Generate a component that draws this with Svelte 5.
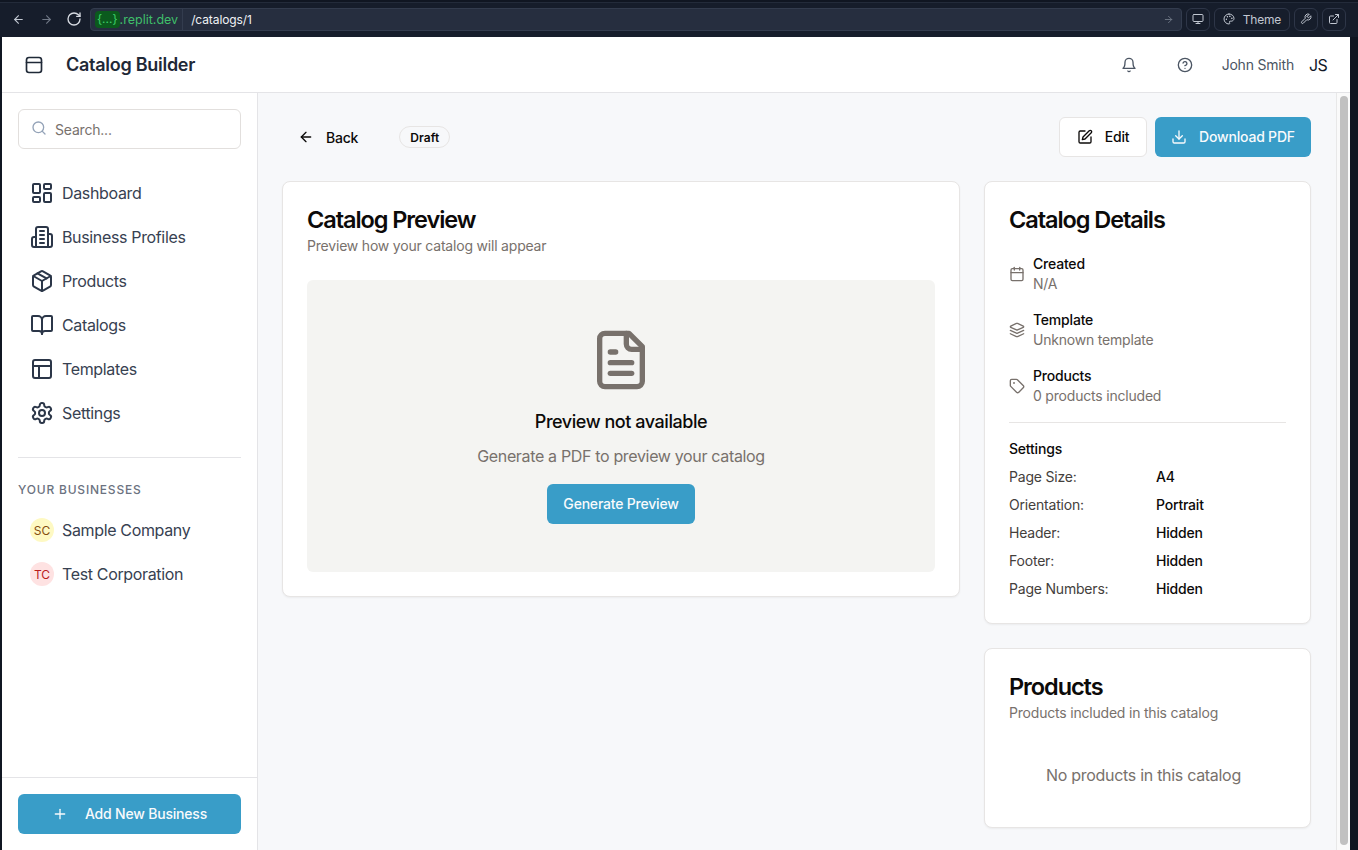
<script>
  const navItems = [
    { label: 'Dashboard', icon: 'dashboard' },
    { label: 'Business Profiles', icon: 'building' },
    { label: 'Products', icon: 'box' },
    { label: 'Catalogs', icon: 'book' },
    { label: 'Templates', icon: 'layout' },
    { label: 'Settings', icon: 'gear' }
  ];

  const businesses = [
    { name: 'Sample Company', initials: 'SC', tone: 'yellow' },
    { name: 'Test Corporation', initials: 'TC', tone: 'red' }
  ];

  const settings = [
    ['Page Size:', 'A4'],
    ['Orientation:', 'Portrait'],
    ['Header:', 'Hidden'],
    ['Footer:', 'Hidden'],
    ['Page Numbers:', 'Hidden']
  ];
</script>

{#snippet navIcon(name)}
  <svg class="nav-icon" viewBox="0 0 24 24">
    {#if name === 'dashboard'}
      <rect x="3" y="3" width="7" height="9" rx="1" /><rect x="14" y="3" width="7" height="5" rx="1" /><rect x="14" y="12" width="7" height="9" rx="1" /><rect x="3" y="16" width="7" height="5" rx="1" />
    {:else if name === 'building'}
      <path d="M6 22V4a2 2 0 0 1 2-2h8a2 2 0 0 1 2 2v18Z" /><path d="M6 12H4a2 2 0 0 0-2 2v6a2 2 0 0 0 2 2h2" /><path d="M18 9h2a2 2 0 0 1 2 2v9a2 2 0 0 1-2 2h-2" /><path d="M10 6h4" /><path d="M10 10h4" /><path d="M10 14h4" /><path d="M10 18h4" />
    {:else if name === 'box'}
      <path d="M21 8a2 2 0 0 0-1-1.73l-7-4a2 2 0 0 0-2 0l-7 4A2 2 0 0 0 3 8v8a2 2 0 0 0 1 1.73l7 4a2 2 0 0 0 2 0l7-4A2 2 0 0 0 21 16Z" /><path d="m3.3 7 8.7 5 8.7-5" /><path d="M12 22V12" /><path d="m7.5 4.27 9 5.15" />
    {:else if name === 'book'}
      <path d="M12 7v14" /><path d="M3 18a1 1 0 0 1-1-1V4a1 1 0 0 1 1-1h5a4 4 0 0 1 4 4 4 4 0 0 1 4-4h5a1 1 0 0 1 1 1v13a1 1 0 0 1-1 1h-6a3 3 0 0 0-3 3 3 3 0 0 0-3-3z" />
    {:else if name === 'layout'}
      <rect x="3" y="3" width="18" height="18" rx="2" /><path d="M3 9h18" /><path d="M9 21V9" />
    {:else}
      <path d="M12.22 2h-.44a2 2 0 0 0-2 2v.18a2 2 0 0 1-1 1.73l-.43.25a2 2 0 0 1-2 0l-.15-.08a2 2 0 0 0-2.73.73l-.22.38a2 2 0 0 0 .73 2.73l.15.1a2 2 0 0 1 1 1.72v.51a2 2 0 0 1-1 1.74l-.15.09a2 2 0 0 0-.73 2.73l.22.38a2 2 0 0 0 2.73.73l.15-.08a2 2 0 0 1 2 0l.43.25a2 2 0 0 1 1 1.73V20a2 2 0 0 0 2 2h.44a2 2 0 0 0 2-2v-.18a2 2 0 0 1 1-1.73l.43-.25a2 2 0 0 1 2 0l.15.08a2 2 0 0 0 2.73-.73l.22-.39a2 2 0 0 0-.73-2.73l-.15-.08a2 2 0 0 1-1-1.74v-.5a2 2 0 0 1 1-1.74l.15-.09a2 2 0 0 0 .73-2.73l-.22-.38a2 2 0 0 0-2.73-.73l-.15.08a2 2 0 0 1-2 0l-.43-.25a2 2 0 0 1-1-1.73V4a2 2 0 0 0-2-2z" /><circle cx="12" cy="12" r="3" />
    {/if}
  </svg>
{/snippet}

<div class="frame">
  <div class="browser">
    <div class="tabs"></div>
    <div class="toolbar">
      <svg class="tool-arrow" viewBox="0 0 24 24"><path d="M19 12H5" /><path d="m12 19-7-7 7-7" /></svg>
      <svg class="tool-arrow dim" viewBox="0 0 24 24"><path d="M5 12h14" /><path d="m12 5 7 7-7 7" /></svg>
      <svg class="tool-reload" viewBox="0 0 24 24"><path d="M21 12a9 9 0 1 1-9-9c2.52 0 4.93 1 6.74 2.74L21 8" /><path d="M21 3v5h-5" /></svg>
      <div class="url">
        <div class="domain"><span class="dev-badge">&#123;...&#125;</span>.replit.dev</div>
        <div class="path">/catalogs/1</div>
        <svg class="go" viewBox="0 0 24 24"><path d="M5 12h14" /><path d="m12 5 7 7-7 7" /></svg>
      </div>
      <div class="tool-btn square">
        <svg viewBox="0 0 24 24"><rect x="2" y="3" width="20" height="14" rx="2" /><path d="M8 21h8" /><path d="M12 17v4" /></svg>
      </div>
      <div class="tool-btn theme">
        <svg viewBox="0 0 24 24"><circle cx="13.5" cy="6.5" r=".5" /><circle cx="17.5" cy="10.5" r=".5" /><circle cx="8.5" cy="7.5" r=".5" /><circle cx="6.5" cy="12.5" r=".5" /><path d="M12 2C6.5 2 2 6.5 2 12s4.5 10 10 10c.93 0 1.65-.75 1.65-1.69 0-.44-.18-.83-.44-1.12-.29-.29-.44-.65-.44-1.13A1.64 1.64 0 0 1 14.44 16.4h1.99c3.05 0 5.55-2.5 5.55-5.55C21.97 6 17.5 2 12 2z" /></svg>
        <span>Theme</span>
      </div>
      <div class="tool-btn square">
        <svg viewBox="0 0 24 24"><path d="M14.7 6.3a1 1 0 0 0 0 1.4l1.6 1.6a1 1 0 0 0 1.4 0l3.77-3.77a6 6 0 0 1-7.94 7.94l-6.91 6.91a2.12 2.12 0 0 1-3-3l6.91-6.91a6 6 0 0 1 7.94-7.94l-3.76 3.76z" /></svg>
      </div>
      <div class="tool-btn square">
        <svg viewBox="0 0 24 24"><path d="M18 13v6a2 2 0 0 1-2 2H5a2 2 0 0 1-2-2V8a2 2 0 0 1 2-2h6" /><path d="m15 3 6 0 0 6" /><path d="M10 14 21 3" /></svg>
      </div>
    </div>
  </div>

  <div class="app">
    <header class="topbar">
      <div class="brand">
        <svg class="brand-icon" viewBox="0 0 24 24"><rect x="3" y="3" width="18" height="18" rx="3" /><path d="M3 9h18" /></svg>
        <h1>Catalog Builder</h1>
      </div>
      <div class="user">
        <svg class="bell" viewBox="0 0 24 24"><path d="M6 8a6 6 0 0 1 12 0c0 7 3 9 3 9H3s3-2 3-9" /><path d="M10.3 21a1.94 1.94 0 0 0 3.4 0" /></svg>
        <svg class="help" viewBox="0 0 24 24"><circle cx="12" cy="12" r="10" /><path d="M9.09 9a3 3 0 0 1 5.83 1c0 2-3 3-3 3" /><path d="M12 17h.01" /></svg>
        <span class="user-name">John Smith</span>
        <span class="user-initials">JS</span>
      </div>
    </header>

    <div class="body">
      <aside class="sidebar">
        <div class="sidebar-top">
          <div class="search">
            <svg viewBox="0 0 24 24"><circle cx="11" cy="11" r="8" /><path d="m21 21-4.3-4.3" /></svg>
            <span>Search...</span>
          </div>
          <nav class="nav">
            {#each navItems as item}
              <div class="nav-item">
                {@render navIcon(item.icon)}
                <span>{item.label}</span>
              </div>
            {/each}
          </nav>
          <div class="side-rule"></div>
          <div class="side-heading">YOUR BUSINESSES</div>
          <div class="biz-list">
            {#each businesses as biz}
              <div class="nav-item biz">
                <span class="avatar {biz.tone}">{biz.initials}</span>
                <span>{biz.name}</span>
              </div>
            {/each}
          </div>
        </div>
        <div class="sidebar-foot">
          <button class="primary add">
            <svg viewBox="0 0 24 24"><path d="M5 12h14" /><path d="M12 5v14" /></svg>
            Add New Business
          </button>
        </div>
      </aside>

      <main class="main">
        <div class="content">
          <div class="actions-row">
            <div class="left-actions">
              <div class="back">
                <svg viewBox="0 0 24 24"><path d="m12 19-7-7 7-7" /><path d="M19 12H5" /></svg>
                <span>Back</span>
              </div>
              <span class="badge">Draft</span>
            </div>
            <div class="right-actions">
              <button class="outline">
                <svg viewBox="0 0 24 24"><path d="M12 3H5a2 2 0 0 0-2 2v14a2 2 0 0 0 2 2h14a2 2 0 0 0 2-2v-7" /><path d="M18.375 2.625a2.121 2.121 0 1 1 3 3L12 15l-4 1 1-4Z" /></svg>
                Edit
              </button>
              <button class="primary download">
                <svg viewBox="0 0 24 24"><path d="M21 15v4a2 2 0 0 1-2 2H5a2 2 0 0 1-2-2v-4" /><path d="m7 10 5 5 5-5" /><path d="M12 15V3" /></svg>
                Download PDF
              </button>
            </div>
          </div>

          <div class="columns">
            <section class="card preview-card">
              <h2>Catalog Preview</h2>
              <p class="sub">Preview how your catalog will appear</p>
              <div class="preview">
                <svg class="file-icon" viewBox="0 0 24 24"><path d="M15 2H6a2 2 0 0 0-2 2v16a2 2 0 0 0 2 2h12a2 2 0 0 0 2-2V7Z" /><path d="M14 2v4a2 2 0 0 0 2 2h4" /><path d="M10 9H8" /><path d="M16 13H8" /><path d="M16 17H8" /></svg>
                <h3>Preview not available</h3>
                <p>Generate a PDF to preview your catalog</p>
                <button class="primary generate">Generate Preview</button>
              </div>
            </section>

            <div class="side-cards">
              <section class="card details">
                <h2>Catalog Details</h2>
                <div class="facts">
                  <div class="fact">
                    <svg viewBox="0 0 24 24"><path d="M8 2v4" /><path d="M16 2v4" /><rect x="3" y="4" width="18" height="18" rx="2" /><path d="M3 10h18" /></svg>
                    <div><div class="fact-label">Created</div><div class="fact-value">N/A</div></div>
                  </div>
                  <div class="fact">
                    <svg viewBox="0 0 24 24"><path d="m12.83 2.18a2 2 0 0 0-1.66 0L2.6 6.08a1 1 0 0 0 0 1.83l8.58 3.91a2 2 0 0 0 1.66 0l8.58-3.9a1 1 0 0 0 0-1.83Z" /><path d="m22 17.65-9.17 4.16a2 2 0 0 1-1.66 0L2 17.65" /><path d="m22 12.65-9.17 4.16a2 2 0 0 1-1.66 0L2 12.65" /></svg>
                    <div><div class="fact-label">Template</div><div class="fact-value">Unknown template</div></div>
                  </div>
                  <div class="fact">
                    <svg viewBox="0 0 24 24"><path d="M12.586 2.586A2 2 0 0 0 11.172 2H4a2 2 0 0 0-2 2v7.172a2 2 0 0 0 .586 1.414l8.704 8.704a2.426 2.426 0 0 0 3.42 0l6.58-6.58a2.426 2.426 0 0 0 0-3.42z" /><circle cx="7.5" cy="7.5" r=".5" /></svg>
                    <div><div class="fact-label">Products</div><div class="fact-value">0 products included</div></div>
                  </div>
                </div>
                <div class="card-rule"></div>
                <div class="settings-title">Settings</div>
                <div class="settings">
                  {#each settings as [key, value]}
                    <div class="setting">
                      <span class="setting-key">{key}</span>
                      <span class="setting-value">{value}</span>
                    </div>
                  {/each}
                </div>
              </section>

              <section class="card products">
                <h2>Products</h2>
                <p class="sub">Products included in this catalog</p>
                <div class="empty">No products in this catalog</div>
              </section>
            </div>
          </div>
        </div>
        <div class="scrollbar"><div class="thumb"></div></div>
      </main>
    </div>
  </div>
</div>

<style>
  :global(body) {
    margin: 0;
    overflow: hidden;
    background: #101622;
  }

  .frame {
    width: 1358px;
    height: 850px;
    display: flex;
    flex-direction: column;
    overflow: hidden;
    background: #101622;
    font-family: Inter, "Liberation Sans", sans-serif;
    letter-spacing: -0.2px;
    color: #0c0a09;
  }

  svg {
    fill: none;
    stroke: currentColor;
    stroke-width: 2;
    stroke-linecap: round;
    stroke-linejoin: round;
    flex: none;
  }

  button {
    font-family: inherit;
    letter-spacing: inherit;
    padding: 0 0 1px;
  }

  /* browser chrome */
  .browser {
    height: 37px;
    flex: none;
    background: #161d2b;
  }

  .tabs {
    height: 3px;
    background: #101622;
    border-bottom: 1px solid #232b3a;
    box-sizing: border-box;
  }

  .toolbar {
    display: flex;
    align-items: center;
    height: 32px;
    padding: 0 12px 0 12px;
    color: #c2c8d2;
  }

  .tool-arrow {
    width: 13px;
    height: 13px;
    margin-right: 15px;
    color: #c2c8d2;
  }

  .tool-arrow.dim {
    color: #6f7785;
    margin-right: 13px;
  }

  .tool-reload {
    width: 16px;
    height: 16px;
    margin-right: 8px;
    color: #d7dbe2;
  }

  .url {
    flex: 1;
    height: 23px;
    display: flex;
    align-items: center;
    background: #262e3f;
    border: 1px solid #333c4e;
    border-radius: 4px;
    box-sizing: border-box;
    font-size: 12px;
    min-width: 0;
  }

  .domain {
    height: 100%;
    display: flex;
    align-items: center;
    padding: 0 4px;
    border-right: 1px solid #333c4e;
    color: #3fbf6a;
    font-size: 12.5px;
    letter-spacing: 0;
  }

  .dev-badge {
    background: #0b5a1d;
    color: #3fd06a;
    border-radius: 4px;
    height: 17px;
    line-height: 16px;
    padding: 0 2px;
    font-size: 12px;
  }

  .path {
    flex: 1;
    padding-left: 8px;
    color: #f0f2f5;
    letter-spacing: -0.1px;
  }

  .go {
    width: 11px;
    height: 11px;
    margin-right: 7px;
    color: #6f7785;
  }

  .tool-btn {
    height: 23px;
    margin-left: 4px;
    display: flex;
    align-items: center;
    justify-content: center;
    border: 1px solid #2e3648;
    border-radius: 6px;
    box-sizing: border-box;
    color: #c2c8d2;
    font-size: 12px;
  }

  .tool-btn svg {
    width: 12px;
    height: 12px;
  }

  .tool-btn.square {
    width: 24px;
  }

  .tool-btn.theme {
    width: 76px;
    gap: 8px;
  }

  /* app shell */
  .app {
    flex: 1;
    min-height: 0;
    margin: 0 8px 0 2px;
    display: flex;
    flex-direction: column;
    background: #fff;
  }

  .topbar {
    height: 56px;
    flex: none;
    box-sizing: border-box;
    display: flex;
    align-items: center;
    justify-content: space-between;
    padding: 0 23px 0 22px;
    border-bottom: 1px solid #e4e4e7;
  }

  .brand {
    display: flex;
    align-items: center;
    gap: 22px;
  }

  .brand-icon {
    width: 20px;
    height: 20px;
    color: #1f2937;
  }

  .brand h1 {
    margin: 1px 0 0;
    font-size: 18px;
    font-weight: 600;
    letter-spacing: -0.27px;
    color: #1f2937;
    line-height: 24px;
  }

  .user {
    display: flex;
    align-items: center;
    color: #4b5563;
  }

  .bell {
    width: 16px;
    height: 16px;
  }

  .help {
    width: 16px;
    height: 16px;
    margin-left: 40px;
  }

  .user-name {
    margin-left: 29px;
    font-size: 14px;
  }

  .user-initials {
    margin-left: 15px;
    font-size: 16px;
    letter-spacing: -0.7px;
    color: #111827;
  }

  .body {
    flex: 1;
    min-height: 0;
    display: flex;
  }

  /* sidebar */
  .sidebar {
    width: 256px;
    flex: none;
    box-sizing: border-box;
    display: flex;
    flex-direction: column;
    justify-content: space-between;
    border-right: 1px solid #e4e4e7;
  }

  .sidebar-top {
    padding: 16px 16px 0;
  }

  .search {
    height: 40px;
    box-sizing: border-box;
    display: flex;
    align-items: center;
    gap: 8px;
    padding-left: 12px;
    border: 1px solid #e2dfdd;
    border-radius: 6px;
    font-size: 14px;
    color: #78716c;
  }

  .search svg {
    width: 16px;
    height: 16px;
    color: #94a3b8;
    margin-top: -3px;
  }

  .nav {
    margin-top: 24px;
    display: flex;
    flex-direction: column;
    gap: 4px;
  }

  .nav-item {
    height: 40px;
    display: flex;
    align-items: center;
    gap: 8px;
    padding-left: 12px;
    font-size: 16px;
    letter-spacing: -0.35px;
    color: #374151;
  }

  .nav-icon {
    width: 24px;
    height: 24px;
    color: #2b3648;
  }

  .side-rule {
    height: 1px;
    margin-top: 24px;
    background: #e4e4e7;
  }

  .side-heading {
    margin-top: 24px;
    font-size: 12px;
    line-height: 16px;
    font-weight: 500;
    letter-spacing: 0.8px;
    color: #6b7280;
  }

  .biz-list {
    margin-top: 12px;
    display: flex;
    flex-direction: column;
    gap: 4px;
  }

  .avatar {
    width: 24px;
    height: 24px;
    border-radius: 50%;
    display: flex;
    align-items: center;
    justify-content: center;
    font-size: 12px;
    letter-spacing: 0;
    flex: none;
  }

  .avatar.yellow {
    background: #fef9c3;
    color: #854d0e;
  }

  .avatar.red {
    background: #fee2e2;
    color: #b91c1c;
  }

  .sidebar-foot {
    border-top: 1px solid #e4e4e7;
    padding: 16px;
  }

  .primary {
    border: none;
    background: #399dc8;
    color: #f8fafc;
    border-radius: 6px;
    font-size: 14px;
    font-weight: 450;
    display: flex;
    align-items: center;
    justify-content: center;
  }

  .add {
    width: 100%;
    height: 40px;
    gap: 17px;
  }

  .add svg {
    width: 16px;
    height: 16px;
  }

  /* main */
  .main {
    flex: 1;
    min-width: 0;
    display: flex;
    background: #f7f8fa;
  }

  .content {
    flex: 1;
    min-width: 0;
    padding: 24px 25px 0 24px;
  }

  .scrollbar {
    width: 14px;
    flex: none;
    border-left: 1px solid #e8e8e8;
    background: #fafafa;
    box-sizing: border-box;
    padding: 3px 2px 0 3px;
  }

  .thumb {
    height: 749px;
    border-radius: 4px;
    background: #c1c1c1;
  }

  .actions-row {
    display: flex;
    align-items: center;
    justify-content: space-between;
    height: 40px;
  }

  .left-actions {
    display: flex;
    align-items: center;
  }

  .back {
    display: flex;
    align-items: center;
    gap: 12px;
    padding-left: 16px;
    font-size: 14px;
    font-weight: 450;
  }

  .back svg {
    width: 16px;
    height: 16px;
  }

  .badge {
    margin-left: 41px;
    height: 22px;
    box-sizing: border-box;
    display: flex;
    align-items: center;
    padding: 0 10px;
    border: 1px solid #e7e5e4;
    border-radius: 999px;
    font-size: 12px;
    font-weight: 600;
    letter-spacing: 0.1px;
  }

  .right-actions {
    display: flex;
    gap: 8px;
  }

  .outline {
    width: 88px;
    height: 40px;
    box-sizing: border-box;
    display: flex;
    align-items: center;
    justify-content: center;
    gap: 12px;
    border: 1px solid #e7e5e4;
    border-radius: 6px;
    background: #fff;
    color: #0c0a09;
    font-size: 14px;
    font-weight: 450;
  }

  .outline svg,
  .download svg {
    width: 16px;
    height: 16px;
  }

  .download {
    width: 156px;
    height: 40px;
    gap: 12px;
  }

  .columns {
    margin-top: 24px;
    display: grid;
    grid-template-columns: 678px 327px;
    gap: 24px;
    align-items: start;
  }

  .card {
    box-sizing: border-box;
    background: #fff;
    border: 1px solid #e7e5e4;
    border-radius: 8px;
    box-shadow: 0 1px 2px rgba(0, 0, 0, 0.05);
    padding: 24px;
  }

  .card h2 {
    margin: 0;
    font-size: 23.5px;
    line-height: 28px;
    font-weight: 600;
    letter-spacing: -1.07px;
    color: #0c0a09;
  }

  .sub {
    margin: 2px 0 0;
    font-size: 14px;
    line-height: 20px;
    color: #78716c;
  }

  .preview {
    margin-top: 24px;
    height: 292px;
    display: flex;
    flex-direction: column;
    align-items: center;
    background: #f4f4f2;
    border-radius: 6px;
  }

  .preview-card {
    min-height: 416px;
  }

  .file-icon {
    width: 64px;
    height: 64px;
    margin-top: 48px;
    color: #78716c;
  }

  .preview h3 {
    margin: 16px 0 0;
    font-size: 18px;
    line-height: 28px;
    font-weight: 500;
    letter-spacing: -0.45px;
  }

  .preview p {
    margin: 8px 0 0;
    font-size: 16px;
    line-height: 24px;
    letter-spacing: -0.34px;
    color: #78716c;
  }

  .generate {
    margin-top: 16px;
    width: 148px;
    height: 40px;
  }

  .side-cards {
    display: flex;
    flex-direction: column;
    gap: 24px;
  }

  .details {
    height: 443px;
  }

  .facts {
    margin-top: 20px;
    display: flex;
    flex-direction: column;
    gap: 16px;
  }

  .fact {
    display: flex;
    align-items: center;
    gap: 8px;
  }

  .fact svg {
    width: 16px;
    height: 16px;
    color: #78716c;
  }

  .fact-label {
    font-size: 14px;
    line-height: 20px;
    font-weight: 450;
  }

  .fact-value {
    font-size: 14px;
    line-height: 20px;
    color: #78716c;
  }

  .card-rule {
    height: 1px;
    margin-top: 16px;
    background: #e7e5e4;
  }

  .settings-title {
    margin-top: 16px;
    font-size: 14px;
    line-height: 20px;
    font-weight: 450;
  }

  .settings {
    margin-top: 3px;
  }

  .setting {
    display: grid;
    grid-template-columns: 147px 1fr;
    height: 28px;
    align-items: center;
    font-size: 14px;
  }

  .setting-key {
    color: #44403c;
  }

  .setting-value {
    font-weight: 450;
  }

  .products {
    height: 180px;
  }

  .empty {
    margin-top: 40px;
    padding-right: 8px;
    text-align: center;
    font-size: 16px;
    line-height: 24px;
    letter-spacing: -0.3px;
    color: #78716c;
  }
</style>
